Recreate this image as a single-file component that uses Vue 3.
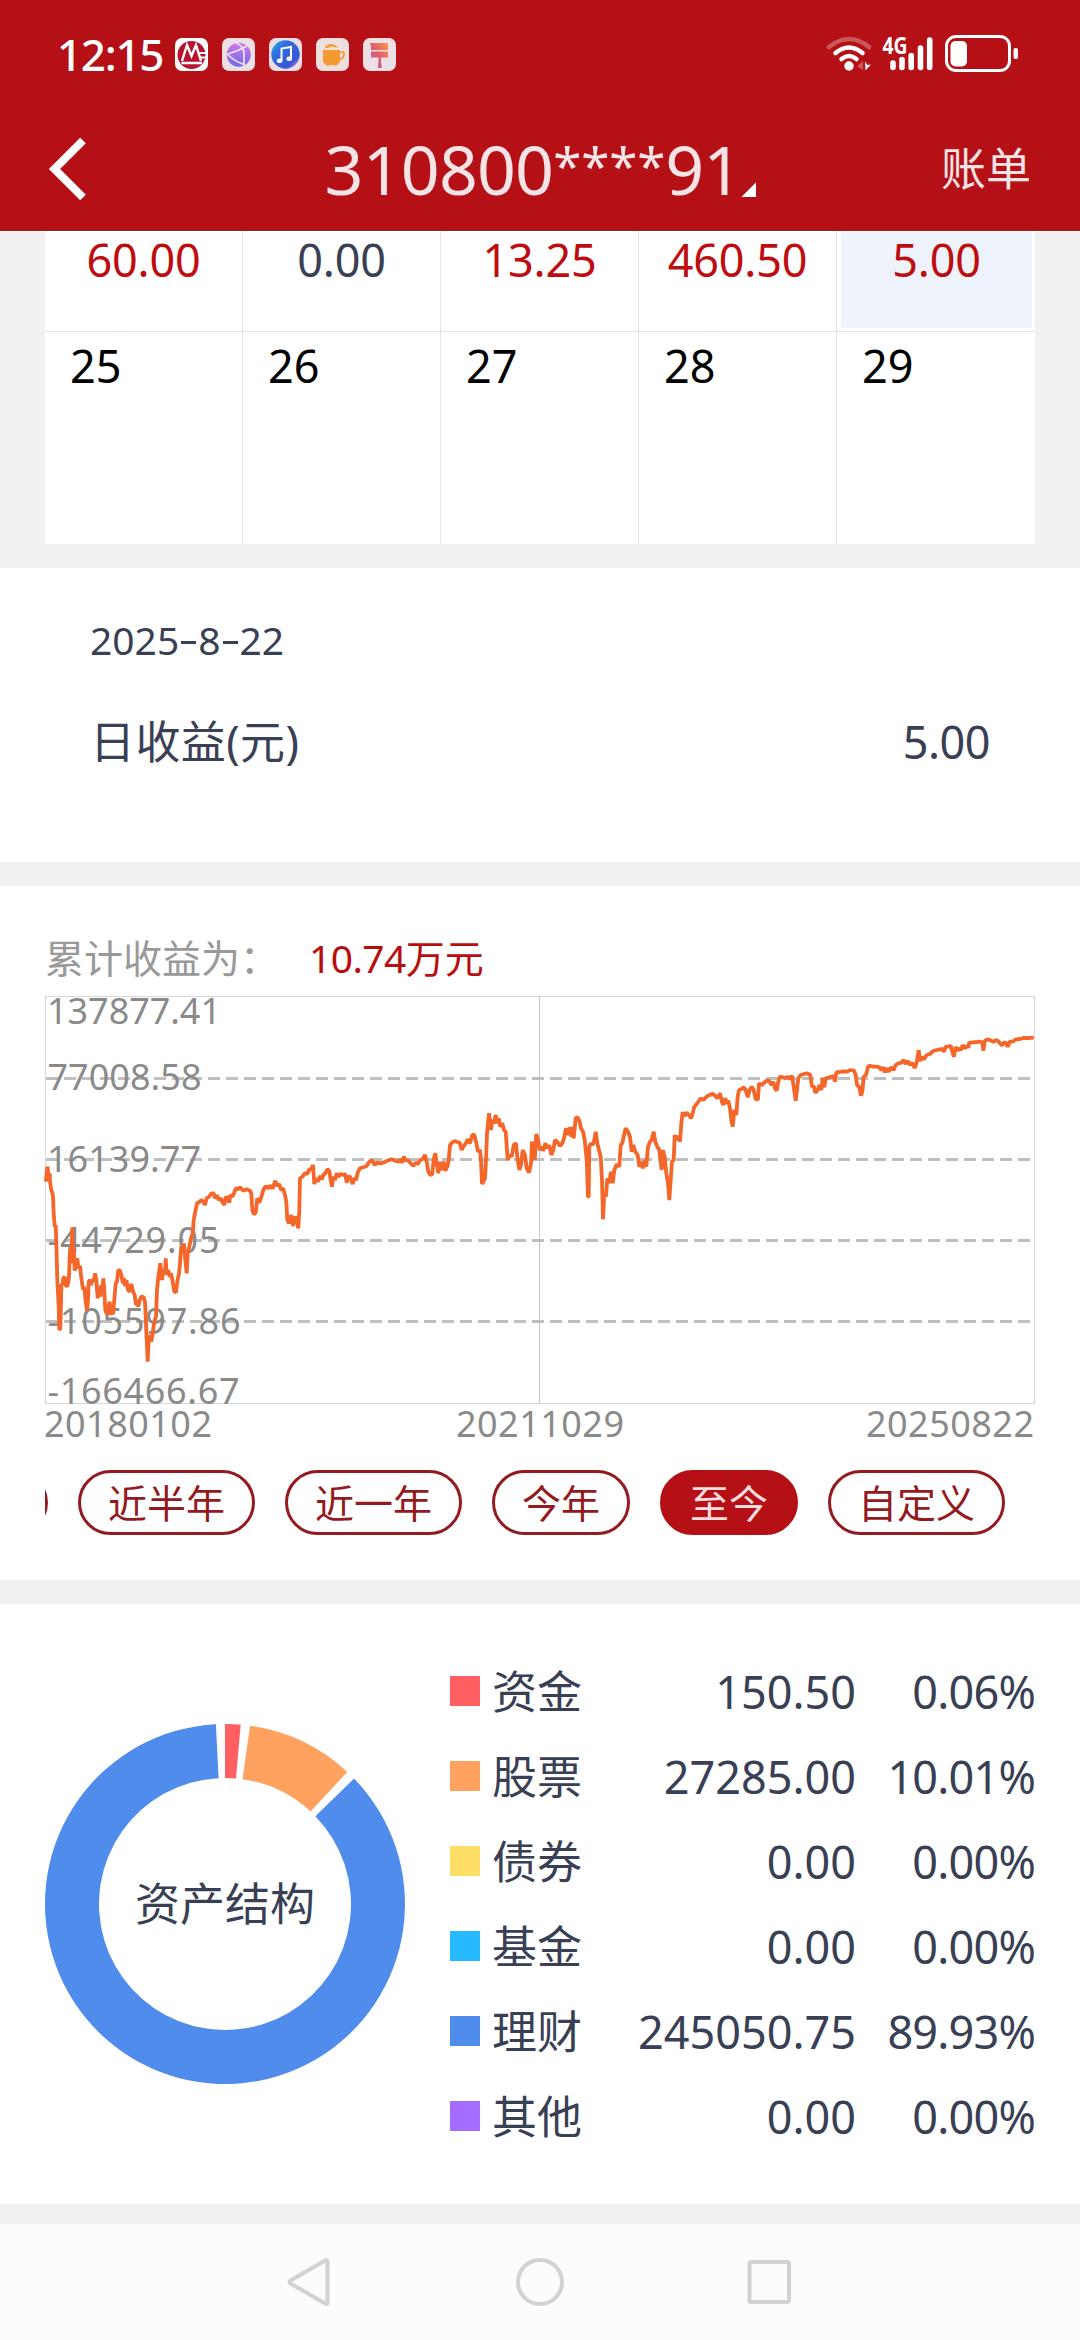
<script setup>
const calendar = {
  profits: [
    { value: '60.00', tone: 'gain' },
    { value: '0.00', tone: 'flat' },
    { value: '13.25', tone: 'gain' },
    { value: '460.50', tone: 'gain' },
    { value: '5.00', tone: 'gain', selected: true }
  ],
  days: ['25', '26', '27', '28', '29']
}

const ranges = [
  { label: '近半年' },
  { label: '近一年' },
  { label: '今年' },
  { label: '至今', active: true },
  { label: '自定义' }
]

const assets = [
  { name: '资金', amount: '150.50', ratio: '0.06%', color: '#ff5f60' },
  { name: '股票', amount: '27285.00', ratio: '10.01%', color: '#ffa15f' },
  { name: '债券', amount: '0.00', ratio: '0.00%', color: '#ffde66' },
  { name: '基金', amount: '0.00', ratio: '0.00%', color: '#26b9ff' },
  { name: '理财', amount: '245050.75', ratio: '89.93%', color: '#508cec' },
  { name: '其他', amount: '0.00', ratio: '0.00%', color: '#a56dff' }
]

const yLabels = [
  { text: '137877.41', x: 47, y: 1023.7, w: 174 },
  { text: '77008.58', x: 47.5, y: 1089.7, w: 154 },
  { text: '16139.77', x: 47, y: 1171.7, w: 154 },
  { text: '-44729.05', x: 47.5, y: 1252.7, w: 172 },
  { text: '-105597.86', x: 47.5, y: 1333.7, w: 193 },
  { text: '-166466.67', x: 47.5, y: 1403.7, w: 192 }
]
const xLabels = [
  { text: '20180102', x: 44, w: 168 },
  { text: '20211029', x: 456, w: 168 },
  { text: '20250822', x: 866, w: 168 }
]

// Profit samples, in thirds of a pixel; each part starts at its own x offset.
const parts = [
  { start: 0, data: '48,605 50,575 53,560 55,590 59,580 60,605 64,630 67,638 69,650 71,700 74,740 77,735 79,790 82,900 86,980 88,1050 91,1045 93,970 94,915 98,912 100,895 104,890 107,915 111,920 115,905 117,890 119,830 121,800 124,840 127,742 129,850 131,800 134,872 138,850 142,835 145,865 150,858 153,885 157,915 160,930 163,920 167,965 171,992 174,960 176,905 180,900 183,915 187,898 191,905 195,880 199,900 203,955 207,920 211,950 214,915 217,940 220,895 223,930 226,990 231,1003 235,985 239,965 243,1005 246,975 249,1003 253,960 257,910 261,905 265,870 270,872 274,885 279,910 282,895 285,918 289,900 294,930 299,935 304,912 309,935 314,945 318,975 322,960 325,980 329,960 334,950 341,952 345,965 347,1010 350,1080 353,1145 356,1080 360,1065 364,1085 368,1060 373,1025 378,1010 381,930 384,900 387,875 391,850 396,900 400,870 405,880 407,835 410,885 414,870 419,890 423,880 428,905 433,935 438,937 442,905 447,880 450,850 454,800 458,808 462,790 466,840 470,880 473,820 478,800 483,775 488,760 491,720 496,695 501,670 508,666 514,660 520,665 525,675 530,655 537,650 545,640 551,640 556,655 561,645 566,660 572,655 577,665 583,675 587,650 593,655 598,668 601,645 607,650 612,640 617,625 625,628 630,622 640,632 650,628 660,632 664,640 667,690 672,703 677,698 682,655 687,668 693,655 700,630 707,618 714,625 720,617 728,625 736,603 742,618 748,612 753,630 759,625 765,645 769,665 772,720 777,730 784,705 789,738 795,710 800,720 805,745 808,690 810,595 817,590 825,580 832,582 838,568 844,568 849,555 853,612 858,595 863,605 870,588 875,598 880,585 886,580 892,568 898,572 902,600 906,620 910,590 915,600 920,580 925,590 932,582 940,585 946,582 950,608 955,590 960,590 968,612 972,595 978,600 984,575 990,565 1000,562 1010,558 1018,545 1026,541 1034,555 1040,548' },
  { start: 990, data: '60,550 70,548 80,543 95,538 105,542 115,545 122,538 127,548 131,530 136,540 145,542 152,550 160,558 167,548 174,553 180,540 188,537 195,525 200,545 205,575 211,585 217,583 221,540 226,520 230,550 235,580 241,545 246,570 251,545 256,572 262,560 266,540 270,495 276,488 284,483 292,486 299,488 305,510 310,500 317,490 323,478 330,490 337,465 343,465 348,485 354,515 360,510 363,540 366,612 370,605 375,595 378,540 381,460 384,430 387,400 393,450 397,420 402,430 407,405 411,430 416,415 421,440 427,430 432,450 437,455 440,500 443,540 450,525 455,530 461,495 468,490 472,530 478,570 483,555 488,510 495,525 500,565 507,578 513,550 516,485 520,500 524,540 529,462 534,478 539,510 545,500 550,512 556,490 563,505 568,495 574,525 580,510 585,480 592,485 600,498 607,490 612,475 618,445 624,465 630,442 634,470 638,440 641,475 647,415 653,412 659,425 663,445 669,455 674,480 680,540 684,650 686,650 688,500 693,490 698,495 703,480 707,455 712,490 717,510 722,530 726,600 729,718 733,640 738,650 742,595 747,610 753,575 758,610 763,570 770,553 778,560 782,495 787,490 792,465 797,445 804,455 810,470 815,515 820,495 826,515 833,525 838,560 844,545 849,565 855,540 859,560 864,500 870,485 875,480 881,455 886,485 892,500 898,510 905,570 908,510 914,530 919,580 924,610 928,660 932,600 936,545 941,540 944,465 949,480 954,468 960,485 964,430 968,397 974,408 980,398 987,405 993,415 998,400 1003,380 1012,370 1022,355 1030,360 1040,350 1048,345' },
  { start: 2040, data: '0,345 8,341 16,348 22,355 30,340 36,365 40,375 46,355 51,370 55,362 60,385 64,420 68,440 73,390 79,405 83,350 87,330 94,328 101,322 107,330 113,352 119,330 125,320 131,330 137,358 144,358 147,310 155,315 163,308 170,302 178,303 184,315 190,305 195,325 200,332 205,305 210,290 218,292 225,295 232,290 239,297 246,287 251,320 257,362 261,330 265,295 272,285 282,282 292,280 301,285 306,320 311,318 316,338 323,330 329,315 334,330 338,295 343,322 347,295 355,293 363,290 370,288 375,305 379,277 390,276 400,274 412,275 420,270 432,272 437,285 441,315 447,320 453,347 457,335 461,290 468,285 474,260 480,257 490,260 500,260 508,262 514,270 519,262 525,277 530,265 536,275 543,262 551,270 557,255 565,250 575,248 581,240 587,252 593,243 601,255 607,248 614,264 620,248 626,210 630,243 636,230 641,238 650,225 660,222 670,213 680,210 690,208 697,207 702,215 707,200 715,200 722,197 728,220 732,230 737,200 742,212 747,205 753,210 758,195 765,205 771,198 775,203 778,188 790,187 800,186 810,185 817,187 820,212 824,183 832,178 840,180 850,186 857,180 865,184 875,196 883,188 888,188 893,200 899,185 908,185 918,178 930,177 940,174 955,174 971,173' }
]
const linePoints = parts
  .flatMap(({ start, data }) =>
    data.split(' ').map((pair) => {
      const [x, y] = pair.split(',').map(Number)
      return `${(30 + (x + start) / 3).toFixed(1)},${(980 + y / 3).toFixed(1)}`
    })
  )
  .join(' ')

// Ring slices: angles run clockwise from twelve o'clock.
const at = (deg, r) => {
  const a = (deg * Math.PI) / 180
  return `${(180 + r * Math.sin(a)).toFixed(2)} ${(180 - r * Math.cos(a)).toFixed(2)}`
}
const slice = (from, to) => {
  const large = to - from > 180 ? 1 : 0
  return `M${at(from, 180)}A180 180 0 ${large} 1 ${at(to, 180)}L${at(to, 126)}A126 126 0 ${large} 0 ${at(from, 126)}Z`
}
const slices = [
  { d: slice(0, 5), color: '#ff5f60' },
  { d: slice(8, 42.8), color: '#ffa15f' },
  { d: slice(45.8, 357.1), color: '#508cec' }
]
</script>

<template>
  <div class="screen">
    <header class="header">
      <div class="status">
        <span class="clock">12:15</span>
        <div class="notices">
          <svg viewBox="0 0 33 33">
            <rect width="33" height="33" rx="7" fill="#fff" />
            <circle cx="16.500" cy="17" r="14" fill="#b81430" />
            <path d="M7 23 12 7 16.500 18 21 7 26 23M6.500 25H27" fill="none" stroke="#fff" stroke-width="2.400" />
            <path d="M24 15H33M25 19.500H33" stroke="#fff" stroke-width="1.800" />
          </svg>
          <svg viewBox="0 0 33 33">
            <defs>
              <linearGradient id="globe" x1="0" y1="0" x2="0" y2="1">
                <stop offset="0" stop-color="#cf78ea" /><stop offset="1" stop-color="#6f6de8" />
              </linearGradient>
            </defs>
            <rect width="33" height="33" rx="7" fill="#eedfe2" />
            <circle cx="16.800" cy="16.800" r="12" fill="url(#globe)" />
            <path d="M6 16Q16 13 25 8M5 16Q12 23 23 27M13 4Q21 8 22 14V28" fill="none" stroke="#f3e6f4" stroke-width="1.600" />
          </svg>
          <svg viewBox="0 0 33 33">
            <defs>
              <linearGradient id="tune" x1="0" y1="0" x2="1" y2="1">
                <stop offset="0" stop-color="#20c4f5" /><stop offset=".3" stop-color="#2f6fe0" /><stop offset=".75" stop-color="#3657d6" /><stop offset="1" stop-color="#e08af0" />
              </linearGradient>
            </defs>
            <rect width="33" height="33" rx="7" fill="#efdde2" />
            <circle cx="16.500" cy="16.500" r="14.200" fill="url(#tune)" />
            <path d="M12.500 22.500V10.500L22 9V20.500" fill="none" stroke="#fff" stroke-width="2" />
            <ellipse cx="10.600" cy="22.800" rx="2.800" ry="2.200" fill="#fff" />
            <ellipse cx="20.200" cy="20.800" rx="2.800" ry="2.200" fill="#fff" />
          </svg>
          <svg viewBox="0 0 33 33">
            <rect width="33" height="33" rx="7" fill="#eedfdc" />
            <path d="M7 12H24V24L20.500 27.500H17L15.500 26.500 14 27.500H10.500L7 24Z" fill="#f59a32" />
            <path d="M24 14.500Q28.500 12.500 28 16.500 27 21 23.500 21.500" fill="none" stroke="#f59a32" stroke-width="1.800" />
            <path d="M9 10Q10 6 15.500 6 20 6.500 21.500 10L15 8.500 12 10Z" fill="#f59a32" />
          </svg>
          <svg viewBox="0 0 33 33">
            <defs>
              <linearGradient id="brush" x1="1" y1="0" x2="0" y2="1">
                <stop offset="0" stop-color="#f79a4c" /><stop offset=".5" stop-color="#e25b6c" /><stop offset="1" stop-color="#8f6fd0" />
              </linearGradient>
            </defs>
            <rect width="33" height="33" rx="7" fill="#eedfe4" />
            <path d="M7 5H25V12H8V8ZM8 13.500H25V19.500H18V23L18.800 30H14.800L15.500 23V19.500H8Z" fill="url(#brush)" />
          </svg>
        </div>
        <svg class="signals" viewBox="825 33 196 42">
          <g fill="none" stroke="#fff" stroke-width="4.500" stroke-linecap="round">
            <path d="M829 47Q849 31 869 47" opacity=".3" />
            <path d="M835.500 53Q849 42 862.500 53" />
            <path d="M841.500 59Q849 53 856.500 59" />
          </g>
          <circle cx="849" cy="66" r="4.700" fill="#fff" />
          <path d="M863 61V70L857 66.500Z" fill="#fff" opacity=".3" />
          <path d="M865 61.500 867.500 65 871 64.500 865.500 70.500Z" fill="#fff" />
          <text class="net" x="882.500" y="53.500" textLength="25" lengthAdjust="spacingAndGlyphs">4G</text>
          <path d="M893 63V67.500M902 59.500V67.500M911.200 55.500V67.500M920.500 48V67.500M929.700 40V67.500" stroke="#fff" stroke-width="5.600" stroke-linecap="round" />
          <rect x="946.500" y="36.500" width="63" height="34" rx="9.500" fill="none" stroke="#fff" stroke-width="3" />
          <rect x="950.500" y="41" width="16.500" height="25.500" rx="5" fill="#fff" />
          <rect x="1013.500" y="48" width="4.500" height="11" rx="2" fill="#fff" />
        </svg>
      </div>
      <div class="titlebar">
        <svg class="back" viewBox="0 0 42 66"><path d="M38 4.500 9.500 33 38 61.500" fill="none" stroke="#fff" stroke-width="8" /></svg>
        <h1 class="title"><span class="account">310800<span class="mask">****</span>91</span><i class="corner"></i></h1>
        <span class="bill">账单</span>
      </div>
    </header>

    <section class="calendar">
      <div class="grid">
        <div v-for="p in calendar.profits" :key="p.value" class="profit" :class="[p.tone, { selected: p.selected }]">
          <span>{{ p.value }}</span>
        </div>
        <div v-for="d in calendar.days" :key="d" class="day">{{ d }}</div>
      </div>
    </section>

    <section class="daily">
      <div class="date">2025<span class="dash">-</span>8<span class="dash">-</span>22</div>
      <div class="income"><span class="label">日收益(元)</span><span class="num">5.00</span></div>
    </section>

    <section class="trend">
      <div class="total"><span>累计收益为：</span><span class="sum"><span class="sumnum">10.74</span>万元</span></div>
      <svg class="chart" viewBox="40 990 1000 460">
        <g fill="none" stroke="#d8d8d8" stroke-width="1">
          <rect x="45.500" y="996.500" width="989" height="407" />
          <path d="M539.500 996V1403" stroke="#c6c6c6" />
        </g>
        <path d="M46 1078.500H1034M46 1159.500H1034M46 1240.500H1034M46 1321.500H1034" stroke="#bfbfbf" stroke-width="3" stroke-dasharray="12 6" />
        <g class="axis">
          <text v-for="l in yLabels" :key="l.text" :x="l.x" :y="l.y" :textLength="l.w">{{ l.text }}</text>
          <text v-for="l in xLabels" :key="l.text" :x="l.x" y="1436.700" :textLength="l.w">{{ l.text }}</text>
        </g>
        <polyline :points="linePoints" fill="none" stroke="#f4662a" stroke-width="3.800" stroke-linejoin="bevel" />
      </svg>
      <nav class="ranges">
        <span class="pill cut"></span>
        <span v-for="r in ranges" :key="r.label" class="pill" :class="{ active: r.active }">{{ r.label }}</span>
      </nav>
    </section>

    <section class="structure">
      <div class="donut">
        <svg viewBox="0 0 360 360"><path v-for="s in slices" :key="s.color" :d="s.d" :fill="s.color" /></svg>
        <span class="caption">资产结构</span>
      </div>
      <ul class="legend">
        <li v-for="a in assets" :key="a.name">
          <i class="swatch" :style="{ background: a.color }"></i>
          <span class="name">{{ a.name }}</span>
          <span class="amount">{{ a.amount }}</span>
          <span class="ratio">{{ a.ratio }}</span>
        </li>
      </ul>
    </section>

    <footer class="sysnav">
      <svg viewBox="285 2255 510 54">
        <g fill="none" stroke="#d2d2d2" stroke-width="4" stroke-linejoin="round">
          <path d="M290.500 2280.500 326 2260Q327.500 2259.500 327.500 2261.500V2302.500Q327.500 2304.500 326 2304L290.500 2283.500Q289 2282 290.500 2280.500Z" />
          <circle cx="540" cy="2282" r="22" />
          <rect x="749.500" y="2262" width="39.500" height="40" rx="1.500" />
        </g>
      </svg>
    </footer>
  </div>
</template>

<style>
body { margin: 0; background: #f1f1f1; }
</style>

<style scoped>
.screen {
  width: 1080px;
  height: 2340px;
  display: flex;
  flex-direction: column;
  overflow: hidden;
  background: #f1f1f1;
  color: #393f54;
  font-family: "Noto Sans", "Noto Sans CJK SC", sans-serif;
  font-size: 45px;
  line-height: 54px;
}
.header {
  box-sizing: border-box;
  height: 231px;
  background: #b41015;
  border-bottom: 1px solid #7f2b2e;
  color: #f5e3e5;
}
.status {
  display: flex;
  align-items: center;
  height: 108px;
  padding: 0 59px 0 57px;
}
.clock {
  width: 118px;
  font-size: 44px;
  font-weight: 500;
  letter-spacing: -1.3px;
  color: #fff;
}
.notices { display: flex; gap: 14px; flex: 1; }
.notices svg { width: 33px; height: 33px; }
.signals { width: 196px; height: 42px; }
.net { font: 700 23px "Noto Sans", sans-serif; fill: #fff; }
.titlebar {
  display: grid;
  grid-template-columns: 1fr auto 1fr;
  align-items: center;
  height: 122px;
  padding: 0 49px 0 45px;
}
.back { width: 42px; height: 66px; }
.title {
  display: flex;
  align-items: flex-end;
  margin: 0 0 0 5px;
  font-size: 68px;
  font-weight: 400;
  line-height: 80px;
}
.account { letter-spacing: -0.8px; }
.mask {
  font-size: 51px;
  line-height: 0;
  letter-spacing: -0.1px;
  vertical-align: 10px;
}
.corner {
  width: 15px;
  height: 15px;
  margin: 0 0 12px;
  background: #fff;
  clip-path: polygon(100% 0, 100% 100%, 0 100%);
}
.bill { justify-self: end; }

.calendar { padding: 0 45px 24px; }
.grid {
  display: grid;
  grid-template-columns: repeat(5, 198px);
  grid-template-rows: 101px 212px;
  background: #fff;
}
.profit, .day { box-sizing: border-box; border-right: 1px solid #e3e3e3; }
.profit:nth-child(5n), .day:nth-child(5n) { border-right: 0; }
.profit { border-bottom: 1px solid #e3e3e3; text-align: center; }
.profit span { display: block; line-height: 57px; letter-spacing: -0.2px; }
.gain { color: #bd0d10; }
.selected span { height: 97px; margin: 0 3px 0 4px; background: #eef3fb; }
.day { padding: 7px 0 0 25px; color: #000; }

.daily { height: 294px; box-sizing: border-box; padding: 45px 90px 0; background: #fff; }
.date { font-size: 39px; }
.dash {
  display: inline-block;
  width: 19px;
  line-height: 1;
  text-align: center;
  transform: translateY(-2px) scaleX(1.6);
}
.income { display: flex; justify-content: space-between; margin-top: 48px; }
.label { letter-spacing: 0.4px; }
.num { letter-spacing: -0.5px; }

.trend {
  height: 694px;
  box-sizing: border-box;
  margin-top: 24px;
  padding: 45px 45px 0;
  background: #fff;
}
.total { display: flex; gap: 30px; font-size: 39px; color: #999; }
.sum { color: #b70d0f; }
.sumnum { letter-spacing: -0.6px; }
.chart { display: block; width: 1000px; height: 460px; margin: 5px -5px 0; }
.axis { font: 36px "Noto Sans", sans-serif; fill: #8a8a8a; }
.ranges {
  display: flex;
  gap: 30px;
  margin-top: 20px;
  overflow: hidden;
}
.pill {
  box-sizing: border-box;
  flex: none;
  height: 65px;
  padding: 0 27px;
  border: 3px solid #931a1f;
  border-radius: 33px;
  color: #931a1f;
  font-size: 39px;
  line-height: 59px;
}
.pill.cut { width: 177px; margin-left: -174px; }
.pill.active { background: #b41015; border-color: #b41015; color: #fbdde0; }

.structure {
  display: flex;
  height: 600px;
  box-sizing: border-box;
  margin-top: 24px;
  padding: 45px;
  background: #fff;
}
.donut {
  display: grid;
  place-items: center;
  width: 360px;
  height: 360px;
  margin: 75px 45px 0 0;
}
.donut > * { grid-area: 1 / 1; }
.legend { flex: 1; margin: 0; padding: 0; list-style: none; }
.legend li { display: flex; align-items: center; height: 85px; }
.swatch { width: 30px; height: 30px; margin: 0 12px 2px 0; }
.amount { flex: 1; text-align: right; }
.ratio { width: 179px; text-align: right; letter-spacing: -0.8px; }

.sysnav {
  display: flex;
  justify-content: center;
  align-items: center;
  height: 116px;
  margin-top: 20px;
  background: #fcfcfc;
}
.sysnav svg { width: 510px; height: 54px; }
</style>
